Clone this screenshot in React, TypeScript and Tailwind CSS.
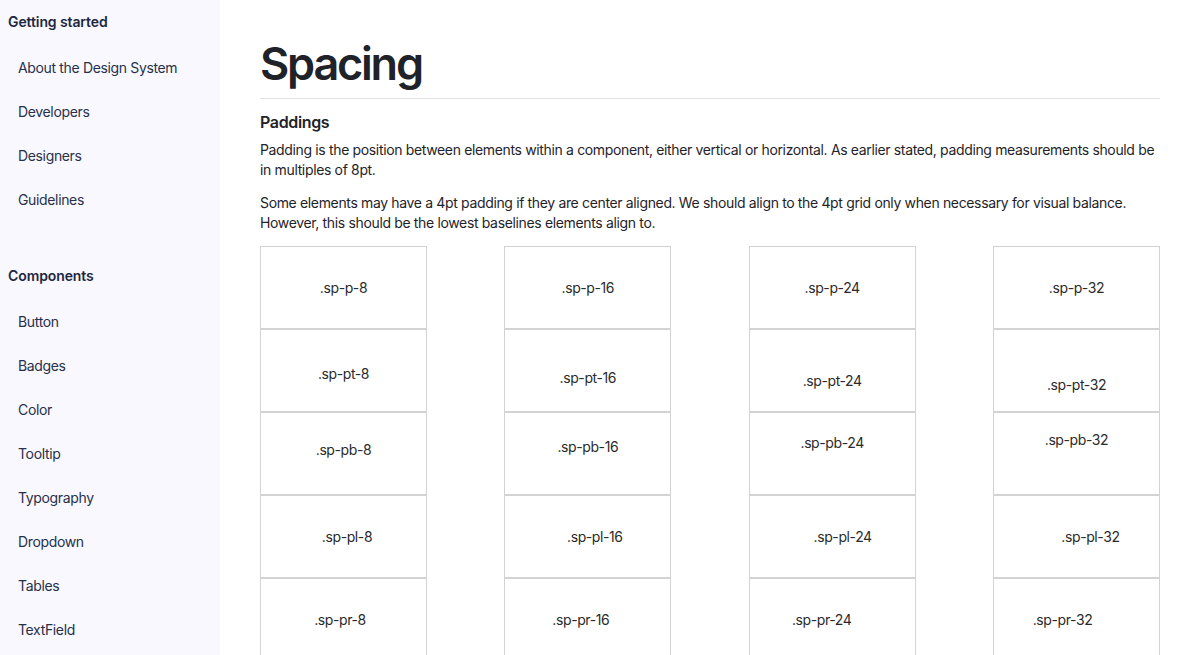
const gettingStarted = ["About the Design System", "Developers", "Designers", "Guidelines"];
const components = ["Button", "Badges", "Color", "Tooltip", "Typography", "Dropdown", "Tables", "TextField"];

// each column: label + the padding classes applied to the cell
const columns = [
  [
    { label: ".sp-p-8", cls: "p-[7px]" },
    { label: ".sp-pt-8", cls: "pt-[7px]" },
    { label: ".sp-pb-8", cls: "pb-[7px]" },
    { label: ".sp-pl-8", cls: "pl-[7px]" },
    { label: ".sp-pr-8", cls: "pr-[7px]" },
  ],
  [
    { label: ".sp-p-16", cls: "p-[14px]" },
    { label: ".sp-pt-16", cls: "pt-[14px]" },
    { label: ".sp-pb-16", cls: "pb-[14px]" },
    { label: ".sp-pl-16", cls: "pl-[14px]" },
    { label: ".sp-pr-16", cls: "pr-[14px]" },
  ],
  [
    { label: ".sp-p-24", cls: "p-[21px]" },
    { label: ".sp-pt-24", cls: "pt-[21px]" },
    { label: ".sp-pb-24", cls: "pb-[21px]" },
    { label: ".sp-pl-24", cls: "pl-[21px]" },
    { label: ".sp-pr-24", cls: "pr-[21px]" },
  ],
  [
    { label: ".sp-p-32", cls: "p-[28px]" },
    { label: ".sp-pt-32", cls: "pt-[28px]" },
    { label: ".sp-pb-32", cls: "pb-[28px]" },
    { label: ".sp-pl-32", cls: "pl-[28px]" },
    { label: ".sp-pr-32", cls: "pr-[28px]" },
  ],
];

function NavGroup({ title, items }: { title: string; items: string[] }) {
  return (
    <div>
      <div className="px-2 text-sm leading-5 font-semibold tracking-[-0.1px] text-[#1e2740]">{title}</div>
      <ul className="mt-[14px]">
        {items.map((item) => (
          <li key={item} className="h-11 flex items-center px-[18px] text-sm tracking-[-0.35px] text-[#28304a]">
            {item}
          </li>
        ))}
      </ul>
    </div>
  );
}

export default function App() {
  return (
    <div className="flex min-h-[655px] bg-white font-['Inter','Noto_Sans',sans-serif]">
      <aside className="w-[220px] shrink-0 bg-[#f8f8fe] pt-3 flex flex-col gap-11">
        <NavGroup title="Getting started" items={gettingStarted} />
        <NavGroup title="Components" items={components} />
      </aside>

      <main className="flex-1 px-10 text-[#1f2329]">
        <h1 className="mt-[40px] text-[45px] leading-[48px] font-semibold tracking-[-2.2px] text-[#1f2329]">Spacing</h1>
        <hr className="mt-[10px] border-0 border-t border-[#e3e3e3]" />
        <h2 className="mt-[13px] text-base leading-5 font-semibold tracking-[-0.35px]">Paddings</h2>
        <p className="mt-[8px] text-sm leading-5 tracking-[-0.35px]">
          Padding is the position between elements within a component, either vertical or horizontal. As earlier stated, padding measurements should be in multiples of 8pt.
        </p>
        <p className="mt-[13px] text-sm leading-5 tracking-[-0.35px]">
          Some elements may have a 4pt padding if they are center aligned. We should align to the 4pt grid only when necessary for visual balance. However, this should be the lowest baselines elements align to.
        </p>

        <div className="mt-[13px] flex justify-between">
          {columns.map((col, i) => (
            <div key={i} className="w-[167px] flex flex-col">
              {col.map((cell) => (
                <div
                  key={cell.label}
                  className={`h-[83px] border border-[#d3d3d3] flex items-center justify-center text-sm tracking-[-0.4px] text-[#2a2a2a] ${cell.cls}`}
                >
                  {cell.label}
                </div>
              ))}
            </div>
          ))}
        </div>
      </main>
    </div>
  );
}
